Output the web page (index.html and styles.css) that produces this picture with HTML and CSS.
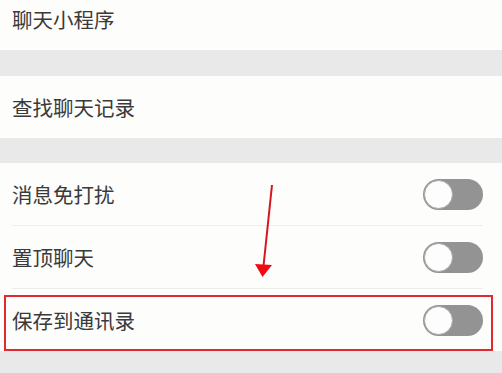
FILE: index.html
```html
<!DOCTYPE html>
<html lang="zh-CN">
<head>
<meta charset="utf-8">
<link rel="stylesheet" href="styles.css">
</head>
<body>
<div class="page">
  <div class="group group-top">
    <div class="row"><span class="label">聊天小程序</span></div>
  </div>
  <div class="group">
    <div class="row"><span class="label">查找聊天记录</span></div>
  </div>
  <div class="group">
    <div class="row"><span class="label">消息免打扰</span><span class="toggle"><span class="knob"></span></span></div>
    <div class="divider"></div>
    <div class="row"><span class="label">置顶聊天</span><span class="toggle"><span class="knob"></span></span></div>
    <div class="divider"></div>
    <div class="row row-marked"><span class="label">保存到通讯录</span><span class="toggle"><span class="knob"></span></span><span class="mark-box"></span></div>
  </div>
  <svg class="arrow" width="502" height="373" viewBox="0 0 502 373">
    <line x1="272" y1="185" x2="263.5" y2="266" stroke="#d8141c" stroke-width="2"/>
    <polygon points="255,264 272,265 262.5,277" fill="#f00a12"/>
  </svg>
</div>
</body>
</html>
```
FILE: styles.css
```css
html, body {
  margin: 0;
  padding: 0;
}
body {
  background: #e9e9e9;
  font-family: "Noto Sans CJK SC", "Noto Sans", sans-serif;
  color: #3a3a3a;
}
.page {
  position: relative;
  width: 502px;
  height: 373px;
  overflow: hidden;
}
.group {
  background: #fdfdfc;
  margin-top: 26px;
}
.group + .group + .group {
  margin-top: 25px;
}
.group-top {
  margin-top: -12px;
}
.row {
  height: 62px;
  display: flex;
  align-items: center;
  justify-content: space-between;
  padding: 0 19px 0 12px;
}
.label {
  font-size: 20.5px;
  line-height: 1;
}
.divider {
  height: 1px;
  margin: 0 19px 0 12px;
  background: #ededed;
}
.toggle {
  width: 60px;
  height: 31px;
  border-radius: 16px;
  background: #939393;
  display: flex;
  align-items: center;
  padding-left: 1px;
  box-sizing: border-box;
}
.knob {
  width: 29px;
  height: 29px;
  border-radius: 50%;
  background: #fdfdfd;
  box-sizing: border-box;
  border: 1.5px solid #a8a8a8;
}
.row-marked {
  position: relative;
}
.mark-box {
  position: absolute;
  left: 4px;
  top: 6px;
  right: 9px;
  bottom: 0;
  border: 2px solid #df2a30;
}
.arrow {
  position: absolute;
  left: 0;
  top: 0;
}
```
